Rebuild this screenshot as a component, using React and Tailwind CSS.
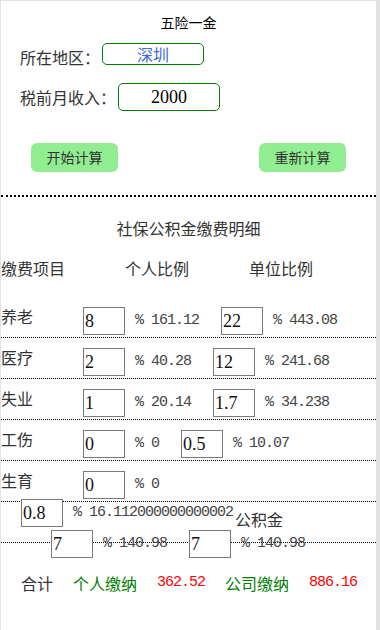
// App.jsx — 五险一金 calculator
const rows = [
  { name: "养老", p: "8", pv: "161.12", c: "22", cv: "443.08" },
  { name: "医疗", p: "2", pv: "40.28", c: "12", cv: "241.68" },
  { name: "失业", p: "1", pv: "20.14", c: "1.7", cv: "34.238" },
  { name: "工伤", p: "0", pv: "0", c: "0.5", cv: "10.07" },
  { name: "生育", p: "0", pv: "0" },
];

function Box({ value, className = "" }) {
  return (
    <input
      readOnly
      defaultValue={value}
      className={
        "w-[42px] h-[28px] shrink-0 border border-[#7a7a7a] bg-white px-[1px] font-['Liberation_Serif',serif] text-[18px] text-[#111] outline-none " +
        className
      }
    />
  );
}

function Pct({ value }) {
  return (
    <span className="ml-[10px] whitespace-pre font-['Liberation_Mono',monospace] text-[15px] leading-[16px] tracking-[-1px] text-[#444]">
      % {value}
    </span>
  );
}

export default function App() {
  return (
    <div className="h-[630px] w-[380px] overflow-hidden bg-[#e2e2e2]">
      <div className="ml-[1px] mt-[1px] h-[629px] w-[375px] bg-white font-['Noto_Sans_CJK_SC',sans-serif] text-[#333]">
        <div className="flex h-[42px] items-center justify-center text-[14px] leading-[14px] font-normal text-black">
          五险一金
        </div>

        <div className="flex h-[22px] pl-[19px]">
          <div className="mt-[6px] text-[16px] leading-[16px]">所在地区：</div>
          <input
            readOnly
            defaultValue="深圳"
            className="ml-[2px] h-[22px] w-[102px] rounded-[5px] border border-[#008000] bg-white text-center text-[16px] text-[#4169e1] outline-none"
          />
        </div>

        <div className="mt-[18px] flex h-[28px] pl-[19px]">
          <div className="mt-[6px] text-[16px] leading-[16px]">税前月收入：</div>
          <input
            readOnly
            defaultValue="2000"
            className="ml-[2px] h-[28px] w-[102px] rounded-[5px] border border-[#008000] bg-white text-center font-['Liberation_Serif',serif] text-[18px] text-black outline-none"
          />
        </div>

        <div className="mt-[32px] flex justify-between pl-[30px] pr-[30px]">
          <button className="h-[29px] w-[87px] rounded-[6px] bg-[#90ee90] text-[14px] text-[#333]">开始计算</button>
          <button className="h-[29px] w-[87px] rounded-[6px] bg-[#90ee90] text-[14px] text-[#333]">重新计算</button>
        </div>

        <div className="mt-[23px] border-t-2 border-dotted border-black" />

        <div className="mt-[23px] text-center text-[16px] leading-[16px]">社保公积金缴费明细</div>

        <div className="mt-[24px] flex text-[16px] leading-[16px]">
          <span className="w-[124px]">缴费项目</span>
          <span className="w-[124px]">个人比例</span>
          <span>单位比例</span>
        </div>

        <div className="mt-[21px]">
          {rows.map((r) => (
            <div key={r.name} className="flex h-[41px] border-b border-dotted border-black">
              <div className="mt-[11px] w-[82px] text-[16px] leading-[16px]">{r.name}</div>
              <div className="mt-[10px] flex h-[28px] items-center">
                <Box value={r.p} />
                <Pct value={r.pv} />
                {r.c && (
                  <>
                    <Box value={r.c} className="ml-[22px]" />
                    <Pct value={r.cv} />
                  </>
                )}
              </div>
            </div>
          ))}
        </div>

        <div className="-mt-[3px] flex h-[28px] items-center pl-[20px]">
          <Box value="0.8" />
          <Pct value="16.112000000000002" />
          <span className="ml-[2px] self-end text-[16px] leading-[16px]">公积金</span>
        </div>

        <div className="mt-[3px] h-[13px] border-b border-dotted border-black" />
        <div className="-mt-[13px] flex h-[28px] items-center pl-[50px]">
          <Box value="7" />
          <Pct value="140.98" />
          <Box value="7" className="ml-[22px]" />
          <Pct value="140.98" />
        </div>

        <div className="mt-[17px] flex items-center pl-[20px] text-[16px] leading-[16px]">
          <span>合计</span>
          <span className="ml-[20px] text-[#008000]">个人缴纳</span>
          <span className="ml-[20px] font-['Liberation_Mono',monospace] text-[15px] tracking-[-1px] text-[#ff0000]">362.52</span>
          <span className="ml-[20px] text-[#008000]">公司缴纳</span>
          <span className="ml-[20px] font-['Liberation_Mono',monospace] text-[15px] tracking-[-1px] text-[#ff0000]">886.16</span>
        </div>
      </div>
    </div>
  );
}
